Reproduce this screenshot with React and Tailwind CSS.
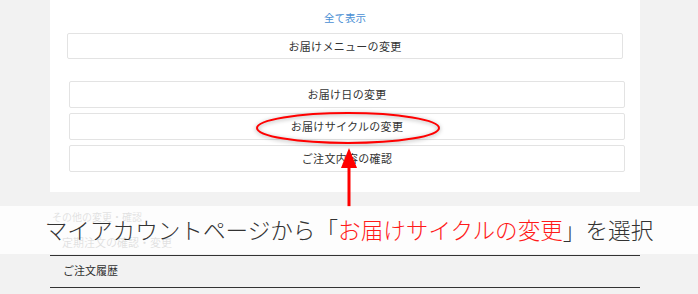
import React from 'react';

const buttons = ['お届け日の変更', 'お届けサイクルの変更', 'ご注文内容の確認'];

function MenuButton({ label, className }) {
  return (
    <div
      className={
        'flex h-[27px] w-[556px] items-center justify-center rounded-[2px] border border-[#e3e3e3] bg-white text-[11px] tracking-[0.3px] text-[#333] ' +
        (className || '')
      }
    >
      {label}
    </div>
  );
}

export default function App() {
  return (
    <div
      className="relative h-[294px] w-[698px] overflow-hidden bg-[#f2f2f2]"
      style={{ fontFamily: '"Noto Sans CJK JP", "Noto Sans", sans-serif' }}
    >
      {/* white panel */}
      <div className="ml-[50px] h-[192px] w-[590px] bg-white pt-[10px]">
        <p className="text-center text-[10.5px] leading-[16px] text-[#4a8fd4]">全て表示</p>
        <div className="ml-[17px] mt-[7px] flex h-[26px] w-[556px] items-center justify-center rounded-[2px] border border-[#e3e3e3] text-[11px] tracking-[0.3px] text-[#333]">
          お届けメニューの変更
        </div>
        <div className="ml-[19px] mt-[22px] flex flex-col gap-[5px]">
          {buttons.map((b) => (
            <MenuButton key={b} label={b} />
          ))}
        </div>
      </div>

      {/* list below */}
      <div className="ml-[50px] w-[590px] text-[#333]">
        <p className="mt-[17px] pl-[2px] text-[10px] leading-[16px]">その他の変更・確認</p>
        <div className="mt-[9px] h-[22px] border-b border-[#333] pl-[12px] text-[11px] leading-[16px]">
          定期注文の確認・変更
        </div>
        <div className="flex h-[32px] items-center border-b border-[#333] pb-[2px] pl-[13px] text-[11px]">
          ご注文履歴
        </div>
      </div>

      {/* annotation: ellipse + arrow */}
      <svg className="pointer-events-none absolute left-0 top-0" width="698" height="294">
        <ellipse
          cx="348"
          cy="128"
          rx="91"
          ry="15"
          fill="none"
          stroke="#ff0000"
          strokeWidth="2"
          style={{ filter: 'drop-shadow(0 1px 2px rgba(0,0,0,0.35))' }}
        />
        <line x1="349" y1="207" x2="349" y2="164" stroke="#ff0000" strokeWidth="3" />
        <polygon points="349,148 341,168 357,168" fill="#ff0000" />
      </svg>

      {/* caption banner */}
      <div className="absolute left-0 right-0 top-[206px] flex h-[48px] items-center justify-center bg-white/85 pb-[1px] text-[22.6px] font-light text-[#333]">
        マイアカウントページから「<span className="text-[#ff1a1a]">お届けサイクルの変更</span>」を選択
      </div>
    </div>
  );
}
